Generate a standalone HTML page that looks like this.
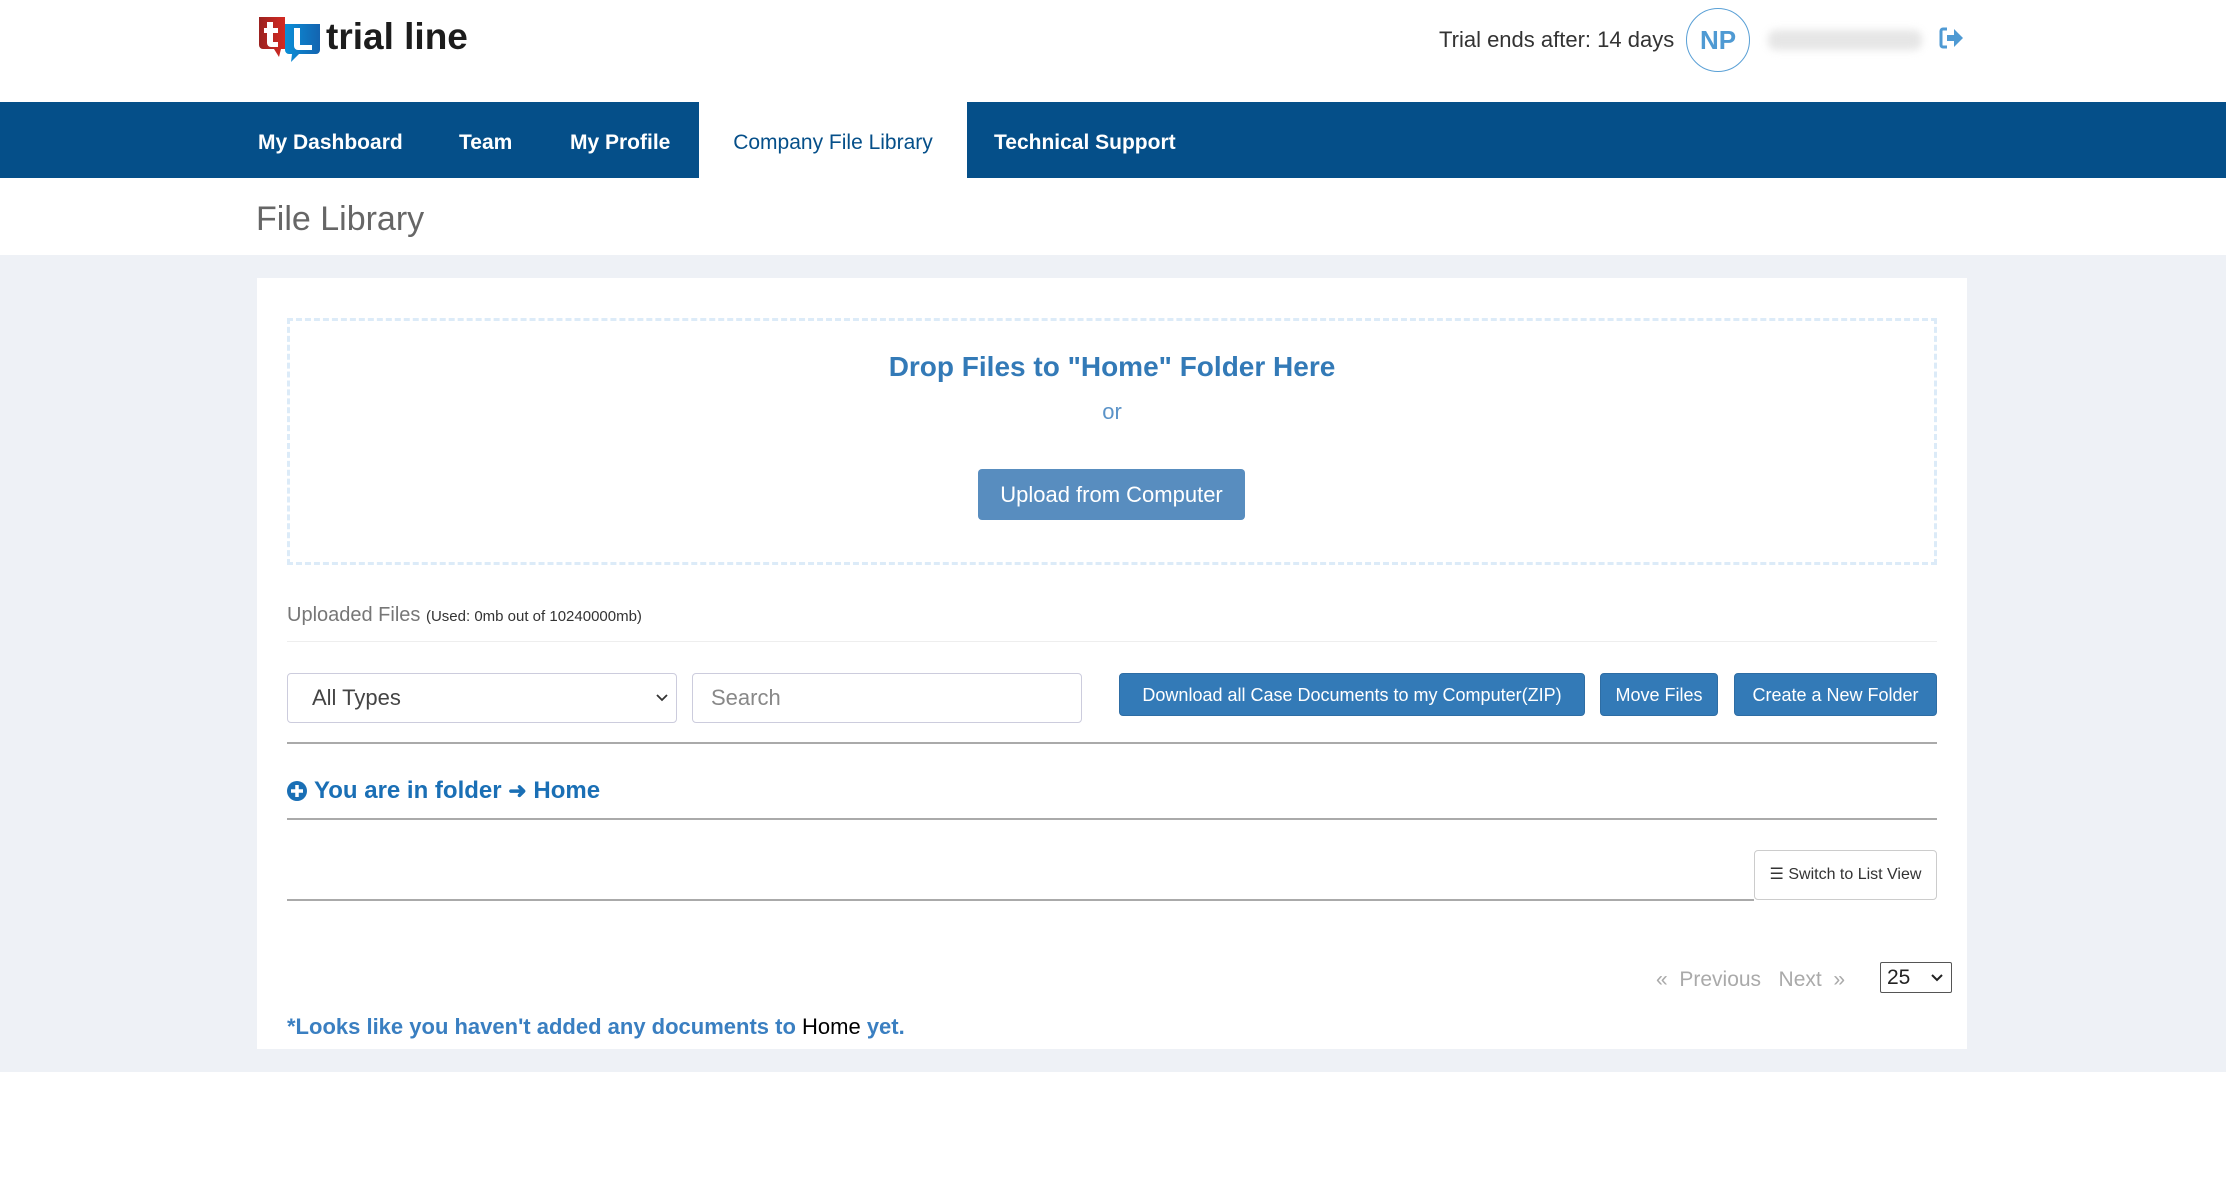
<!DOCTYPE html>
<html><head><meta charset="utf-8">
<style>
*{margin:0;padding:0;box-sizing:border-box}
body{width:2226px;height:1199px;background:#fff;font-family:"Liberation Sans",Arial,sans-serif;position:relative;overflow:hidden}
.a{position:absolute;white-space:nowrap}
.nav{position:absolute;left:0;top:102px;width:2226px;height:76px;background:#054f89}
.nav span{position:absolute;top:3px;height:76px;line-height:76px;color:#fff;font-weight:bold;font-size:21px}
.btn{position:absolute;background:#337ab7;color:#fff;border-radius:4px;font-size:18px;text-align:center;line-height:43px;height:43px;border:1px solid #2e6da4}
hr{position:absolute;border:none}
</style></head><body>
<svg class="a" style="left:255px;top:14px" width="90" height="50" viewBox="0 0 90 50">
<defs><linearGradient id="r" x1="0" x2="1"><stop offset="0" stop-color="#9b2220"/><stop offset="1" stop-color="#d42a23"/></linearGradient>
<linearGradient id="b" x1="0" x2="1"><stop offset="0" stop-color="#0a8fd8"/><stop offset="1" stop-color="#1464b0"/></linearGradient></defs>
<path d="M4 3h26v32h-4l-2 8-5-8H8a4 4 0 0 1-4-4z" fill="url(#r)"/>
<path d="M30 10h35v26a4 4 0 0 1-4 4H44l-8 8 1-8h-3a4 4 0 0 1-4-4z" fill="url(#b)"/>
<path d="M12 8h6v6h5v5h-5v9h5v5h-7a4 4 0 0 1-4-4V19h-3v-5h3z" fill="#fff"/>
<path d="M39 14h6v17h12v5H43a4 4 0 0 1-4-4z" fill="#fff"/>
</svg>
<div class="a" style="left:326px;top:16px;font-size:37px;font-weight:bold;color:#1c1c1c">trial line</div>
<div class="a" style="left:1439px;top:27px;font-size:22px;color:#333">Trial ends after: 14 days</div>
<div class="a" style="left:1686px;top:8px;width:64px;height:64px;border:1.5px solid #5aa0d6;border-radius:50%;color:#4f9ad3;font-weight:bold;font-size:26px;text-align:center;line-height:62px">NP</div>
<div class="a" style="left:1768px;top:30px;width:154px;height:20px;background:#e6e6e6;border-radius:8px;filter:blur(4px)"></div>
<svg class="a" style="left:1938px;top:26px" width="26" height="24" viewBox="0 0 26 24"><path d="M9 3H5a2 2 0 0 0-2 2v14a2 2 0 0 0 2 2h4" stroke="#4f9ad3" stroke-width="3" fill="none"/><path d="M9 9h7V3l9 9-9 9v-6H9z" fill="#4f9ad3"/></svg>
<div class="nav">
<span style="left:258px">My Dashboard</span>
<span style="left:459px">Team</span>
<span style="left:570px">My Profile</span>
<span style="left:699px;top:0;width:268px;background:#fff;color:#054f89;font-weight:normal;text-align:center;line-height:82px">Company File Library</span>
<span style="left:994px">Technical Support</span>
</div>
<div class="a" style="left:256px;top:200px;font-size:34px;color:#666">File Library</div>
<div class="a" style="left:0;top:255px;width:2226px;height:817px;background:#eef1f6"></div>
<div class="a" style="left:257px;top:278px;width:1710px;height:771px;background:#fff"></div>
<div class="a" style="left:287px;top:318px;width:1650px;height:247px;border:3px dashed #dcebf8"></div>
<div class="a" style="left:287px;top:351px;width:1650px;text-align:center;font-size:28px;font-weight:bold;color:#337ab7">Drop Files to "Home" Folder Here</div>
<div class="a" style="left:287px;top:399px;width:1650px;text-align:center;font-size:22px;color:#5b93c8">or</div>
<div class="a" style="left:978px;top:469px;width:267px;height:51px;background:#588dbf;border-radius:4px;color:#fff;font-size:22px;text-align:center;line-height:51px">Upload from Computer</div>
<div class="a" style="left:287px;top:604px;font-size:20px;color:#777">Uploaded Files <span style="font-size:15px;color:#333">(Used: 0mb out of 10240000mb)</span></div>
<hr style="left:287px;top:641px;width:1650px;height:1px;background:#eee">
<div class="a" style="left:287px;top:673px;width:390px;height:50px;border:1px solid #ccd;border-radius:4px;font-size:22px;color:#444;line-height:48px;padding-left:24px">All Types<svg style="position:absolute;right:8px;top:20px" width="12" height="8" viewBox="0 0 12 8"><path d="M1 1l5 5 5-5" stroke="#333" stroke-width="1.8" fill="none"/></svg></div>
<div class="a" style="left:692px;top:673px;width:390px;height:50px;border:1px solid #ccd;border-radius:4px;font-size:22px;color:#888;line-height:48px;padding-left:18px">Search</div>
<div class="btn" style="left:1119px;top:673px;width:466px">Download all Case Documents to my Computer(ZIP)</div>
<div class="btn" style="left:1600px;top:673px;width:118px">Move Files</div>
<div class="btn" style="left:1734px;top:673px;width:203px">Create a New Folder</div>
<hr style="left:287px;top:742px;width:1650px;height:2px;background:#aaa">
<svg class="a" style="left:287px;top:781px" width="20" height="20" viewBox="0 0 20 20"><circle cx="10" cy="10" r="10" fill="#1a6fb5"/><path d="M10 4v12M4 10h12" stroke="#fff" stroke-width="3.5"/></svg>
<div class="a" style="left:314px;top:777px;font-size:24px;font-weight:bold;color:#1a6fb5">You are in folder <span style="font-size:22px">&#10140;</span> Home</div>
<hr style="left:287px;top:818px;width:1650px;height:2px;background:#aaa">
<div class="a" style="left:1754px;top:850px;width:183px;height:50px;border:1px solid #ccc;border-radius:4px;font-size:16px;color:#333;line-height:48px;text-align:center">&#9776; Switch to List View</div>
<hr style="left:287px;top:899px;width:1467px;height:2px;background:#aaa">
<div class="a" style="left:1656px;top:968px;font-size:21px;color:#aaa">«&nbsp; Previous &nbsp;&nbsp;Next &nbsp;»</div>
<div class="a" style="left:1880px;top:962px;width:72px;height:31px;border:1px solid #555;border-radius:2px;font-size:21px;color:#222;line-height:29px;padding-left:6px">25<svg style="position:absolute;right:8px;top:11px" width="12" height="8" viewBox="0 0 12 8"><path d="M1 1l5 5 5-5" stroke="#222" stroke-width="2" fill="none"/></svg></div>
<div class="a" style="left:287px;top:1014px;font-size:22px;font-weight:bold;color:#3a7fc1">*Looks like you haven't added any documents to <span style="color:#000;font-weight:normal">Home</span> yet.</div>
</body></html>
